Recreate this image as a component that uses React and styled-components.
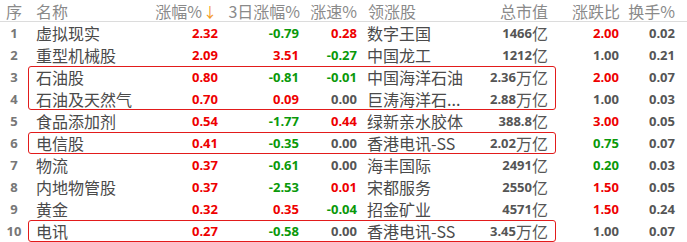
import React from 'react'
import styled, { createGlobalStyle } from 'styled-components'

const GlobalStyle = createGlobalStyle`
  html, body {
    margin: 0;
    padding: 0;
    background: #fff;
    overflow: hidden;
  }
  body {
    font-family: "Noto Sans CJK SC", "Open Sans", sans-serif;
  }
`

const COLORS = {
  r: '#ee0000',
  g: '#0a990a',
  n: '#555555',
}

const Table = styled.div`
  width: 687px;
  height: 242px;
  overflow: hidden;
`

const Band = styled.div`
  display: grid;
  grid-template-columns: 28px 528px 1fr;
  border-bottom: ${(p) => (p.$head ? '1px solid #dcdcdc' : 'none')};
`

const Stack = styled.div`
  display: flex;
  flex-direction: column;
`

const Box = styled.div`
  display: flex;
  flex-direction: column;
  border-radius: 3px;
  outline: ${(p) => (p.$framed ? '1px solid #e21b1b' : 'none')};
  outline-offset: -1px;
`

const MidRow = styled.div`
  display: grid;
  grid-template-columns: 122px 70px 80px 58px 100px 98px;
  height: ${(p) => (p.$head ? '21px' : '22px')};
`

const SideRow = styled.div`
  display: grid;
  grid-template-columns: 64px 56px 1fr;
  height: ${(p) => (p.$head ? '21px' : '22px')};
`

const Cell = styled.div`
  display: flex;
  align-items: center;
  justify-content: ${(p) => (p.$align === 'left' ? 'flex-start' : p.$align === 'center' ? 'center' : 'flex-end')};
  padding-left: ${(p) => p.$pl || 0}px;
  padding-right: ${(p) => p.$pr || 0}px;
  height: ${(p) => (p.$head ? '21px' : '22px')};
  white-space: nowrap;
  overflow: visible;
`

const HeadText = styled.span`
  font-family: "Noto Sans CJK SC", "Open Sans", sans-serif;
  font-size: 16px;
  color: #8a8a8a;
  line-height: 1;
`

const Arrow = styled.span`
  color: #f39a1e;
  font-size: 14px;
  margin-left: 1px;
`

const Index = styled.span`
  font-family: "Open Sans", sans-serif;
  font-weight: 700;
  font-size: 13px;
  color: #777;
`

const Name = styled.span`
  font-family: "Noto Sans CJK SC", sans-serif;
  font-size: 16px;
  color: #4a4a4a;
  line-height: 1;
`

const Num = styled.span`
  font-family: "Open Sans", sans-serif;
  font-weight: 700;
  font-size: 13px;
  color: ${(p) => COLORS[p.$c || 'n']};
`

const Unit = styled.span`
  font-family: "Noto Sans CJK SC", sans-serif;
  font-size: 16px;
  color: #555;
  line-height: 1;
`

const rows = [
  ['1', '虚拟现实', '2.32', 'r', '-0.79', 'g', '0.28', 'r', '数字王国', '1466', '亿', '2.00', 'r', '0.02'],
  ['2', '重型机械股', '2.09', 'r', '3.51', 'r', '-0.27', 'g', '中国龙工', '1212', '亿', '1.00', 'n', '0.21'],
  ['3', '石油股', '0.80', 'r', '-0.81', 'g', '-0.01', 'g', '中国海洋石油', '2.36', '万亿', '2.00', 'r', '0.07'],
  ['4', '石油及天然气', '0.70', 'r', '0.09', 'r', '0.00', 'n', '巨涛海洋石...', '2.88', '万亿', '1.00', 'n', '0.03'],
  ['5', '食品添加剂', '0.54', 'r', '-1.77', 'g', '0.44', 'r', '绿新亲水胶体', '388.8', '亿', '3.00', 'r', '0.05'],
  ['6', '电信股', '0.41', 'r', '-0.35', 'g', '0.00', 'n', '香港电讯-SS', '2.02', '万亿', '0.75', 'g', '0.07'],
  ['7', '物流', '0.37', 'r', '-0.61', 'g', '0.00', 'n', '海丰国际', '2491', '亿', '0.20', 'g', '0.03'],
  ['8', '内地物管股', '0.37', 'r', '-2.53', 'g', '0.01', 'r', '宋都服务', '2550', '亿', '1.50', 'r', '0.05'],
  ['9', '黄金', '0.32', 'r', '0.35', 'r', '-0.04', 'g', '招金矿业', '4571', '亿', '1.50', 'r', '0.24'],
  ['10', '电讯', '0.27', 'r', '-0.58', 'g', '0.00', 'n', '香港电讯-SS', '3.45', '万亿', '1.00', 'n', '0.07'],
]

// groups of row indexes, framed ones get the red outline
const bands = [
  { items: [0, 1] },
  { items: [2, 3], framed: true },
  { items: [4] },
  { items: [5], framed: true },
  { items: [6, 7, 8] },
  { items: [9], framed: true },
]

const Header = () => (
  <Band $head>
    <Cell $head $align="center">
      <HeadText>序</HeadText>
    </Cell>
    <Box>
      <MidRow $head>
        <Cell $head $align="left" $pl={8}>
          <HeadText>名称</HeadText>
        </Cell>
        <Cell $head $pr={3}>
          <HeadText>涨幅%</HeadText>
          <Arrow>↓</Arrow>
        </Cell>
        <Cell $head $pr={0}>
          <HeadText>3日涨幅%</HeadText>
        </Cell>
        <Cell $head $pr={1}>
          <HeadText>涨速%</HeadText>
        </Cell>
        <Cell $head $align="left" $pl={10}>
          <HeadText>领涨股</HeadText>
        </Cell>
        <Cell $head $pr={8}>
          <HeadText>总市值</HeadText>
        </Cell>
      </MidRow>
    </Box>
    <SideRow $head>
      <Cell $head $pr={0}>
        <HeadText>涨跌比</HeadText>
      </Cell>
      <Cell $head $pr={1}>
        <HeadText>换手%</HeadText>
      </Cell>
      <Cell $head />
    </SideRow>
  </Band>
)

const RowBand = ({ items, framed }) => {
  const list = items.map((i) => rows[i])
  return (
    <Band>
      <Stack>
        {list.map((r) => (
          <Cell key={r[0]} $align="center">
            <Index>{r[0]}</Index>
          </Cell>
        ))}
      </Stack>
      <Box $framed={framed}>
        {list.map((r) => (
          <MidRow key={r[0]}>
            <Cell $align="left" $pl={8}>
              <Name>{r[1]}</Name>
            </Cell>
            <Cell $pr={2}>
              <Num $c={r[3]}>{r[2]}</Num>
            </Cell>
            <Cell $pr={1}>
              <Num $c={r[5]}>{r[4]}</Num>
            </Cell>
            <Cell $pr={1}>
              <Num $c={r[7]}>{r[6]}</Num>
            </Cell>
            <Cell $align="left" $pl={9}>
              <Name>{r[8]}</Name>
            </Cell>
            <Cell $pr={8}>
              <Num>{r[9]}</Num>
              <Unit>{r[10]}</Unit>
            </Cell>
          </MidRow>
        ))}
      </Box>
      <Stack>
        {list.map((r) => (
          <SideRow key={r[0]}>
            <Cell $pr={1}>
              <Num $c={r[12]}>{r[11]}</Num>
            </Cell>
            <Cell $pr={1}>
              <Num>{r[13]}</Num>
            </Cell>
            <Cell />
          </SideRow>
        ))}
      </Stack>
    </Band>
  )
}

const App = () => (
  <>
    <GlobalStyle />
    <Table>
      <Header />
      {bands.map((b, i) => (
        <RowBand key={i} items={b.items} framed={b.framed} />
      ))}
    </Table>
  </>
)

export default App
